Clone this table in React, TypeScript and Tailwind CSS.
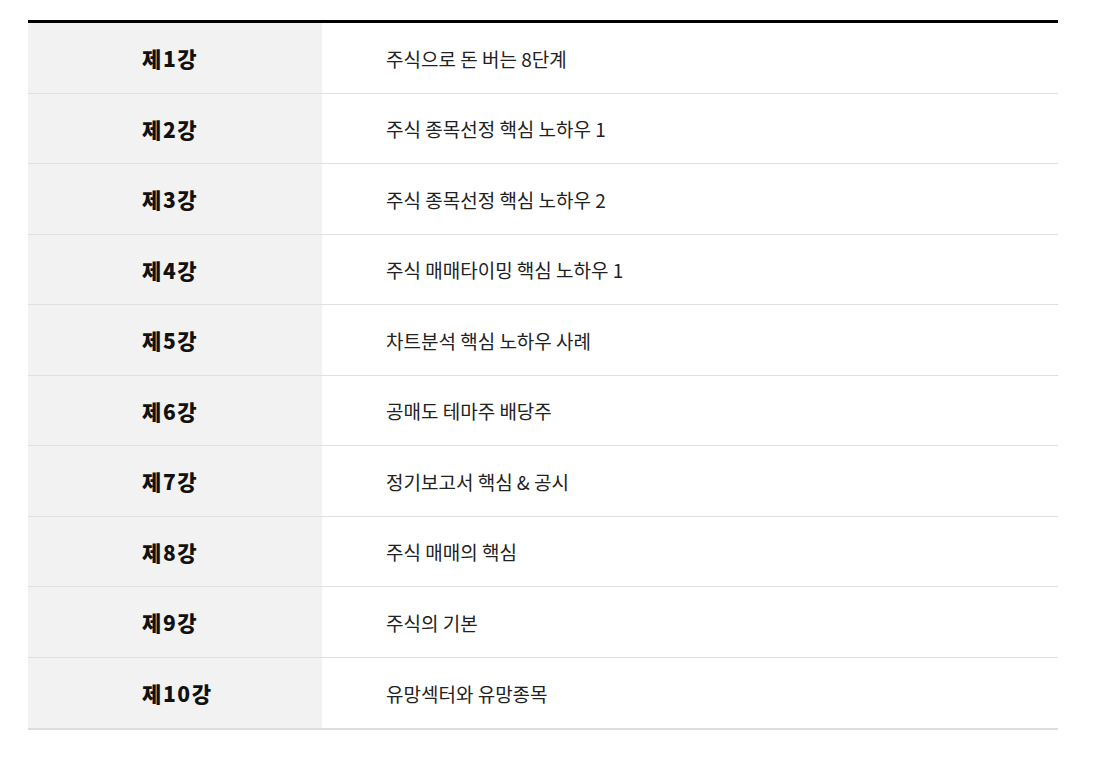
import React from "react";

const rows = [
  ["제1강", "주식으로 돈 버는 8단계"],
  ["제2강", "주식 종목선정 핵심 노하우 1"],
  ["제3강", "주식 종목선정 핵심 노하우 2"],
  ["제4강", "주식 매매타이밍 핵심 노하우 1"],
  ["제5강", "차트분석 핵심 노하우 사례"],
  ["제6강", "공매도 테마주 배당주"],
  ["제7강", "정기보고서 핵심 & 공시"],
  ["제8강", "주식 매매의 핵심"],
  ["제9강", "주식의 기본"],
  ["제10강", "유망섹터와 유망종목"],
];

export default function App() {
  return (
    <div
      className="w-[1100px] h-[757px] bg-white pt-[20px] px-[28px]"
      style={{ fontFamily: '"Noto Sans CJK KR", "Noto Sans", sans-serif' }}
    >
      <div className="w-[1030px] border-t-[3px] border-black border-b-2 border-b-[#dddddd]">
        {rows.map(([a, b], i) => (
          <div
            key={i}
            className={`flex h-[70.5px] ${i < rows.length - 1 ? "border-b border-[#e0e0e0]" : ""}`}
          >
            <div className="w-[294px] bg-[#f2f2f2] flex items-center pl-[114px] pt-[2px] text-[21px] font-black text-[#111] tracking-[1.6px]">
              {a}
            </div>
            <div className="flex-1 flex items-center pl-[64px] pt-[2px] text-[19px] text-[#222]">
              {b}
            </div>
          </div>
        ))}
      </div>
    </div>
  );
}
